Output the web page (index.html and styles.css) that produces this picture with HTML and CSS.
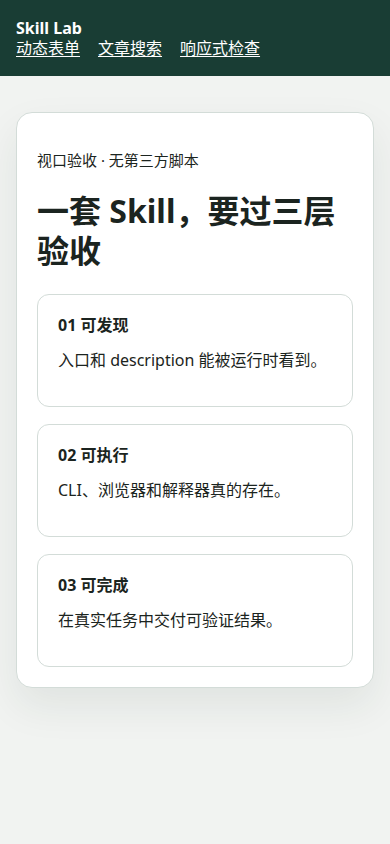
FILE: index.html
```html
<!DOCTYPE html>
<html lang="zh">
<head>
<meta charset="utf-8">
<meta name="viewport" content="width=device-width, initial-scale=1">
<title>Skill Lab</title>
<link rel="stylesheet" href="styles.css">
</head>
<body>
<header class="site-header">
  <div class="brand">Skill Lab</div>
  <nav class="nav">
    <a href="#">动态表单</a>
    <a href="#">文章搜索</a>
    <a href="#">响应式检查</a>
  </nav>
</header>
<main class="main">
  <section class="panel">
    <p class="eyebrow">视口验收 · 无第三方脚本</p>
    <h1 class="title">一套 Skill，要过三层验收</h1>
    <div class="steps">
      <article class="step">
        <h2 class="step-title">01 可发现</h2>
        <p class="step-text">入口和 description 能被运行时看到。</p>
      </article>
      <article class="step">
        <h2 class="step-title">02 可执行</h2>
        <p class="step-text">CLI、浏览器和解释器真的存在。</p>
      </article>
      <article class="step">
        <h2 class="step-title">03 可完成</h2>
        <p class="step-text">在真实任务中交付可验证结果。</p>
      </article>
    </div>
  </section>
</main>
</body>
</html>
```
FILE: styles.css
```css
* { box-sizing: border-box; }
html, body { margin: 0; padding: 0; }
body {
  background: #f1f3f1;
  color: #1b2420;
  font-family: "Noto Sans", "Noto Sans CJK SC", sans-serif;
  min-height: 844px;
}
.site-header {
  background: #193d34;
  color: #ffffff;
  padding: 18px 16px 18px;
  height: 76px;
}
.brand {
  font-weight: 700;
  font-size: 16px;
  line-height: 20px;
}
.nav {
  display: flex;
  gap: 18px;
  font-size: 16px;
  line-height: 20px;
}
.nav a {
  color: #ffffff;
  text-decoration: underline;
  text-underline-offset: 2px;
}
.main {
  padding: 36px 16px;
}
.panel {
  background: #ffffff;
  border: 1px solid #d3dcd8;
  border-radius: 16px;
  padding: 36px 20px 20px;
  box-shadow: 0 18px 40px rgba(30, 50, 40, 0.08);
}
.eyebrow {
  margin: 0;
  font-size: 15px;
  line-height: 22px;
}
.title {
  margin: 20px 0 23px;
  font-size: 32px;
  line-height: 40px;
  font-weight: 700;
}
.steps {
  display: flex;
  flex-direction: column;
  gap: 17px;
}
.step {
  border: 1px solid #d3dcd8;
  border-radius: 12px;
  padding: 19px 20px 34px;
}
.step-title {
  margin: 0;
  font-size: 16px;
  line-height: 22px;
  font-weight: 700;
}
.step-text {
  margin: 12px 0 0;
  font-size: 16px;
  line-height: 24px;
}
```
